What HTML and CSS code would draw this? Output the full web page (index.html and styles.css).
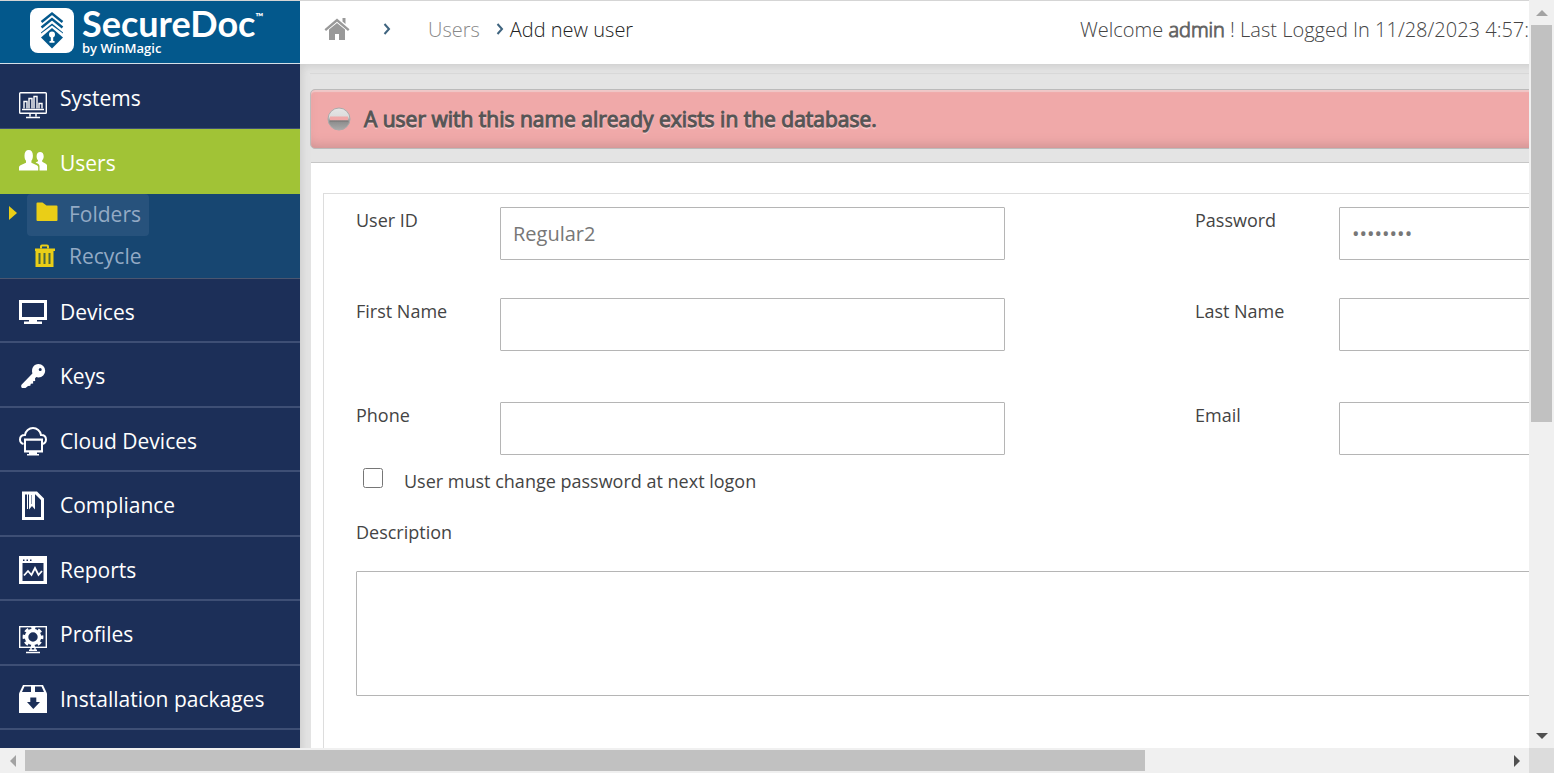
FILE: index.html
```html
<!DOCTYPE html>
<html lang="en">
<head>
<meta charset="utf-8">
<title>SecureDoc - Add new user</title>
<link rel="stylesheet" href="styles.css">
</head>
<body>
<div class="window">
  <div class="viewport">
    <aside class="sidebar">
      <a class="brand" href="#">
        <svg class="brand-mark" viewBox="0 0 44 45" aria-hidden="true">
          <rect width="44" height="45" rx="8" fill="#fff"/>
          <path d="m11.500 14 10.500-8.500 10.500 8.500M11.500 19.500 22 11 32.500 19.500" fill="none" stroke="#03588c" stroke-width="2.400"/>
          <path d="M22 15.500 33 24.500v1L22 17.500 11 25.500v-1z" fill="#03588c"/>
          <path d="M22 20 33 29.500 22 40.500 11 29.500z" fill="#03588c"/>
          <circle cx="22" cy="26.500" r="3" fill="#fff"/>
          <path d="M20.800 28h2.400v5h1.300v1.800h-5V33h1.300z" fill="#fff"/>
        </svg>
        <span class="brand-text"><span class="brand-name">SecureDoc<sup class="brand-tm">™</sup></span><span class="brand-by">by WinMagic</span></span>
      </a>
      <nav class="nav">
        <a class="item tall first" href="#">
          <svg class="icon" viewBox="0 0 28 60" fill="none" stroke="#fff" aria-hidden="true">
            <rect x=".7" y="28.700" width="26.600" height="20.600" rx=".8" stroke-width="1.400"/>
            <path d="M3 45.500h22M11 49.500v3M17 49.500v3M7 53.500h14" stroke-width="1.500"/>
            <path d="M5 44.500v-7h3v7M10 44.500v-10h3v10M15 44.500v-12h3v12M20 44.500v-5h3v5" stroke-width="1.400"/>
          </svg>
          Systems</a>
        <a class="item tall active" href="#">
          <svg class="icon" viewBox="0 0 28 60" fill="#fff" aria-hidden="true">
            <path d="M0 41.500v-3c0-1 .5-1.700 1.500-2.200l5.500-2.500v-2C5.800 30.500 5.500 29 5.500 26.500 5.500 23 7 21 9.700 21s4.200 2 4.200 5.500c0 2.500-.4 4-1.500 5.300v2l5.400 2.500c1 .5 1.400 1.200 1.400 2.200v3z"/>
            <path d="M20.500 41.500v-4c0-1.700-.8-2.500-2.500-3.200l-1.500-.8 2.500-1.300v-1c-1-1-1.400-2.200-1.400-4 0-2.700 1.400-4.200 3.500-4.200s3.600 1.500 3.600 4.200c0 1.800-.5 3-1.500 4v1.600l3.600 2c1 .6 1.300 1.200 1.300 2.400v4.300z"/>
          </svg>
          Users</a>
        <div class="subnav">
          <a class="sub current" href="#">
            <svg class="sub-icon" viewBox="0 0 22 24" fill="#eace17" aria-hidden="true"><path d="M.5 2.500q0-1 1-1h5l4 3h10q1 0 1 1v13.500q0 1-1 1h-19q-1 0-1-1z"/></svg>
            Folders</a>
          <a class="sub" href="#">
            <svg class="sub-icon" viewBox="1 0 22 24" aria-hidden="true"><path d="M7 4.500V2.500q0-1 1-1h5q1 0 1 1v2" fill="none" stroke="#eace17" stroke-width="2"/><path d="M0 4.500h21v2.500h-1.500v16H1.500V7H0z" fill="#eace17"/><path d="M5.500 9v11M10.500 9v11M15.500 9v11" stroke="#4b673f" stroke-width="2"/></svg>
            Recycle</a>
        </div>
        <a class="item" href="#">
          <svg class="icon" viewBox="0 0 28 60" fill="#fff" aria-hidden="true"><path fill-rule="evenodd" d="M0 21h28v20H18v1.500h5V45H5v-2.500h5V41H0zm3 3v14h22V24z"/></svg>
          Devices</a>
        <a class="item tall" href="#">
          <svg class="icon" viewBox="0 0 28 60" fill="#fff" aria-hidden="true"><path fill-rule="evenodd" d="M19.500 21a6.700 6.700 0 0 1 0 13.400c-1 0-1.500-.2-2.300-.4L16 35.500l.2 2.500-2.200.2.200 2.300-2.400.2-.5 2-2.300.3L6.500 45H3c-1-1-1-2-.5-3.200L13.400 30.500C12 25 15 21 19.500 21zm1.700 4a1.500 1.500 0 1 0 0 3 1.500 1.500 0 0 0 0-3z"/></svg>
          Keys</a>
        <a class="item" href="#">
          <svg class="icon" viewBox="0 0 28 60" aria-hidden="true"><path d="M4.500 36C2.500 35.500 1 34 1 31.500 1 28.500 3 26.800 6 27c.5-4 4-7 8-7s7.300 3 8 7c3-.2 5 1.500 5 4.500 0 2.500-1.500 4-3.500 4.500" fill="none" stroke="#fff" stroke-width="2"/><path fill-rule="evenodd" d="M5 30.500h19v14h-6V46h2v1.500H8V46h2v-1.500H5zm2 2.300v9.400h15v-9.400z" fill="#fff"/></svg>
          Cloud Devices</a>
        <a class="item tall" href="#">
          <svg class="icon" viewBox="0 0 28 60" fill="#fff" aria-hidden="true"><path fill-rule="evenodd" d="M3 19.500h15l7 7V48H3zm3 3V45h16V28l-5.500-5.500z"/><path d="M8 21h1v16H8zM10 21h6v16.500L13 34l-3 3.500z"/><path d="M12.500 23v9" stroke="#8e9aaf" stroke-width="1"/></svg>
          Compliance</a>
        <a class="item" href="#">
          <svg class="icon" viewBox="0 0 28 60" aria-hidden="true"><path fill="#fff" d="M0 19h28v28H0z"/><path fill="#1c2f58" d="M3.500 26h21v18h-21zM4 22.500h1.500V24H4zM7.500 22.500H9V24H7.500zM11 22.500h1.500V24H11z"/><path d="m5 38.500 4-4.500 3.500 4 3.500-7 3.500 7 3.500-4" fill="none" stroke="#fff" stroke-width="1.800"/></svg>
          Reports</a>
        <a class="item tall" href="#">
          <svg class="icon" viewBox="0 0 28 60" fill="none" stroke="#fff" aria-hidden="true"><rect x=".7" y="25.700" width="26.600" height="20.600" stroke-width="1.400"/><circle cx="14" cy="36" r="6.500" stroke-width="3.600"/><circle cx="14" cy="36" r="9" stroke-width="2.800" stroke-dasharray="4 3.068" stroke-dashoffset="2"/><path d="M10 49.300h8M7 51.500h14M12 46v3M16 46v3" stroke-width="1.500"/></svg>
          Profiles</a>
        <a class="item" href="#">
          <svg class="icon" viewBox="0 0 28 60" aria-hidden="true"><path d="M4 19h20l4 8.500V47H0V27.500z" fill="#fff"/><path d="M5.500 20.500H12V26H3zM16 20.500h6.500L25 26h-9zM11.300 31.500h6V36H21l-6.700 7L8 36h3.300z" fill="#1c2f58"/></svg>
          Installation packages</a>
      </nav>
    </aside>

    <main class="main">
      <header class="topbar">
        <nav class="crumbs" aria-label="Breadcrumb">
          <a class="home" href="#" aria-label="Home"><svg viewBox="0 0 26 24" aria-hidden="true"><path d="M18.500 1h3v6l-3-2.500zM13 1.500 25.500 12.300 24 14 13 4.800 2 14 .5 12.300z" fill="#999"/><path d="m13 6 8 6.500V23h-6v-6h-4v6H5V12.500z" fill="#999"/></svg></a>
          <svg class="chevron lone" viewBox="0 0 8 12" aria-hidden="true"><path d="m1.500 1 4.500 5-4.500 5" fill="none" stroke="#3f647f" stroke-width="2"/></svg>
          <a class="crumb" href="#">Users</a>
          <svg class="chevron" viewBox="0 0 8 12" aria-hidden="true"><path d="m1.500 1 4.500 5-4.500 5" fill="none" stroke="#3f647f" stroke-width="2"/></svg>
          <span class="here">Add new user</span>
        </nav>
        <div class="welcome">Welcome <strong>admin</strong> ! Last Logged In 11/28/2023 4:57:</div>
      </header>

      <div class="content">
        <div class="alert" role="alert">
          <svg class="alert-icon" viewBox="0 0 24 24" aria-hidden="true">
            <defs><linearGradient id="ball" x1="0" y1="0" x2="0" y2="1"><stop offset="0" stop-color="#e6e6e6"/><stop offset=".4" stop-color="#dcdcdc"/><stop offset=".6" stop-color="#8c8c8c"/><stop offset="1" stop-color="#aaa"/></linearGradient></defs>
            <circle cx="12" cy="12" r="11" fill="url(#ball)" stroke="#aaa"/>
            <path d="M3 9.500h18v4H3z" fill="#f0a9a9"/><path d="M3 14h18" stroke="#777"/>
          </svg>
          A user with this name already exists in the database.
        </div>
        <section class="panel">
          <form class="form">
            <div class="fields">
              <label for="uid">User ID</label><input class="box" id="uid" type="text" value="Regular2">
              <label class="second" for="pwd">Password</label><input class="box" id="pwd" type="password" value="password">
            </div>
            <div class="fields names">
              <label for="fn">First Name</label><input class="box" id="fn" type="text">
              <label class="second" for="ln">Last Name</label><input class="box" id="ln" type="text">
            </div>
            <div class="fields">
              <label for="ph">Phone</label><input class="box" id="ph" type="text">
              <label class="second" for="em">Email</label><input class="box" id="em" type="text">
            </div>
            <div class="check"><input class="tick" id="change" type="checkbox"><label for="change">User must change password at next logon</label></div>
            <label class="desc-label" for="desc">Description</label>
            <textarea class="desc" id="desc"></textarea>
          </form>
        </section>
      </div>
    </main>
  </div>

  <div class="bar vertical" aria-hidden="true">
    <span class="arrow"><svg viewBox="0 0 12 6"><path d="M6 0 12 6H0z" fill="#a3a3a3"/></svg></span>
    <span class="track"><span class="thumb"></span></span>
    <span class="arrow"><svg viewBox="0 0 12 6"><path d="M0 0h12L6 6z" fill="#505050"/></svg></span>
  </div>
  <div class="bar horizontal" aria-hidden="true">
    <span class="arrow"><svg viewBox="0 0 6 12"><path d="M6 0v12L0 6z" fill="#a3a3a3"/></svg></span>
    <span class="track"><span class="thumb"></span></span>
    <span class="arrow"><svg viewBox="0 0 6 12"><path d="M0 0v12l6-6z" fill="#505050"/></svg></span>
  </div>
  <div class="corner"></div>
</div>
</body>
</html>
```

FILE: styles.css
```css
* { box-sizing: border-box; }

body {
  margin: 0;
  font-family: "Open Sans", "Noto Sans", sans-serif;
  font-size: 21px;
  color: #444;
}

a { color: inherit; text-decoration: none; }
svg { display: block; flex: none; }

.window {
  display: grid;
  grid-template: minmax(0, 1fr) 25px / minmax(0, 1fr) 25px;
  height: 100vh;
}

.viewport {
  display: flex;
  overflow: hidden;
  border-top: 1px solid #d5d5d5;
  background: #e4e4e4;
}

/* Sidebar */
.sidebar {
  flex: 0 0 300px;
  background: #1c2f58;
  color: #fff;
}

.brand {
  display: flex;
  gap: 8px;
  height: 63px;
  padding: 7px 0 0 30px;
  background: #03588c;
  border-bottom: 1px solid #d5e0e8;
}

.brand-mark { width: 44px; height: 45px; }

.brand-text { display: flex; flex-direction: column; }

.brand-name {
  display: flex;
  height: 32px;
  font: 700 36px/30px Lato, sans-serif;
}

.brand-tm { font-size: 11px; line-height: 18px; }

.brand-by { font-size: 13px; font-weight: 600; line-height: 16px; }

.item {
  display: flex;
  gap: 13px;
  height: 64px;
  padding-left: 19px;
  border-bottom: 2px solid #3e4f75;
  line-height: 66px;
}

.item.tall { height: 65px; }
.item.first { border-bottom-width: 1px; line-height: 68px; }
.item.active { background: #a1c336; border-bottom: 0; line-height: 68px; }
.icon { width: 28px; height: 60px; }

.subnav {
  display: flex;
  flex-direction: column;
  height: 85px;
  padding-left: 27px;
  background: #174671;
  border-bottom: 1px solid #4a5670;
  color: #93aac5;
  position: relative;
}

.subnav::before {
  content: "";
  position: absolute;
  left: 9px;
  top: 12px;
  border: 7px solid transparent;
  border-left: 8px solid #eace17;
  border-right: 0;
}

.sub {
  display: flex;
  align-items: center;
  align-self: flex-start;
  gap: 12px;
  height: 42px;
  padding: 0 8px 2px;
  border-radius: 4px;
}

.sub.current { background: #27527c; }
.sub-icon { width: 22px; height: 24px; }
.sub.current .sub-icon { margin: 0 -1px 2px 1px; }

/* Main column */
.main { flex: 1; min-width: 0; }

.topbar {
  display: flex;
  justify-content: space-between;
  height: 63px;
  padding-left: 24px;
  background: #fff;
  font-size: 20px;
  font-weight: 300;
  line-height: 58px;
  white-space: nowrap;
}

.crumbs { display: flex; align-items: center; height: 58px; }
.home svg { width: 26px; height: 24px; }
.chevron { width: 8px; height: 12px; margin: 0 6px 2px 16px; }
.chevron.lone { margin: 0 37px 2px 33px; }
.home { padding-bottom: 2px; }
.crumb { color: #888; }
.here { color: #222; }
.welcome { color: #444; }
.welcome strong { font-weight: 300; color: #666; -webkit-text-stroke: 1px #666; }

.content {
  min-width: 1720px;
  padding: 9px 0 0 10px;
  box-shadow: inset 8px 8px 8px -6px #ccc;
}

.content::before {
  content: "";
  display: block;
  height: 15px;
  border-top: 1px solid #d8d8d8;
}

.alert {
  display: flex;
  align-items: center;
  gap: 13px;
  height: 60px;
  padding-left: 16px;
  border: 1px solid #bbb;
  border-radius: 5px;
  background: #f0a9a9;
  box-shadow: inset 0 2px 1px #efc8c8, inset 0 -8px 12px -6px #c99090;
  color: #555;
  -webkit-text-stroke: 1px #555;
  text-shadow: 0 2px 1px #f6d0d0;
}

.alert-icon { width: 24px; height: 24px; }

.panel {
  height: 800px;
  margin: 13px 0 0 1px;
  padding: 30px 0 0 12px;
  border-top: 1px solid #c6c6c6;
  background: #fff;
}

.form {
  height: 100%;
  padding: 13px 0 0 32px;
  border: 1px solid #ddd;
  font-size: 18px;
  line-height: 26px;
}

.fields {
  display: grid;
  grid-template-columns: 144px 505px 334px 505px;
  min-height: 53px;
}

.fields.names { margin: 38px 0 51px; }
.second { padding-left: 190px; }

.box, .desc {
  min-width: 0;
  border: 1px solid #b5b5b5;
  border-radius: 1px;
  background: #fff;
  color: #777;
  font: 400 20px "Open Sans", sans-serif;
}

.box { height: 53px; padding: 0 12px; }

.check {
  display: flex;
  gap: 21px;
  padding: 13px 0 0 7px;
}

.tick { width: 20px; height: 20px; margin: 0; }

.desc-label { display: block; margin-top: 25px; }

.desc {
  display: block;
  width: 1500px;
  height: 125px;
  margin-top: 26px;
  resize: none;
}

/* Scroll bars */
.bar { display: flex; background: #f0f0f0; }
.vertical { grid-area: 1 / 2; flex-direction: column; padding: 0 2px; }
.horizontal { grid-area: 2 / 1; padding: 2px 0; }
.corner { grid-area: 2 / 2; background: #dcdcdc; }
.arrow { display: grid; place-items: center; flex: 0 0 25px; }
.vertical .arrow svg { width: 12px; height: 6px; }
.horizontal .arrow svg { width: 6px; height: 12px; }
.track { flex: 1; }
.thumb { display: block; background: #c1c1c1; }
.vertical .thumb { height: 56.9%; }
.horizontal .track { display: flex; }
.horizontal .thumb { width: 75.7%; }
```
